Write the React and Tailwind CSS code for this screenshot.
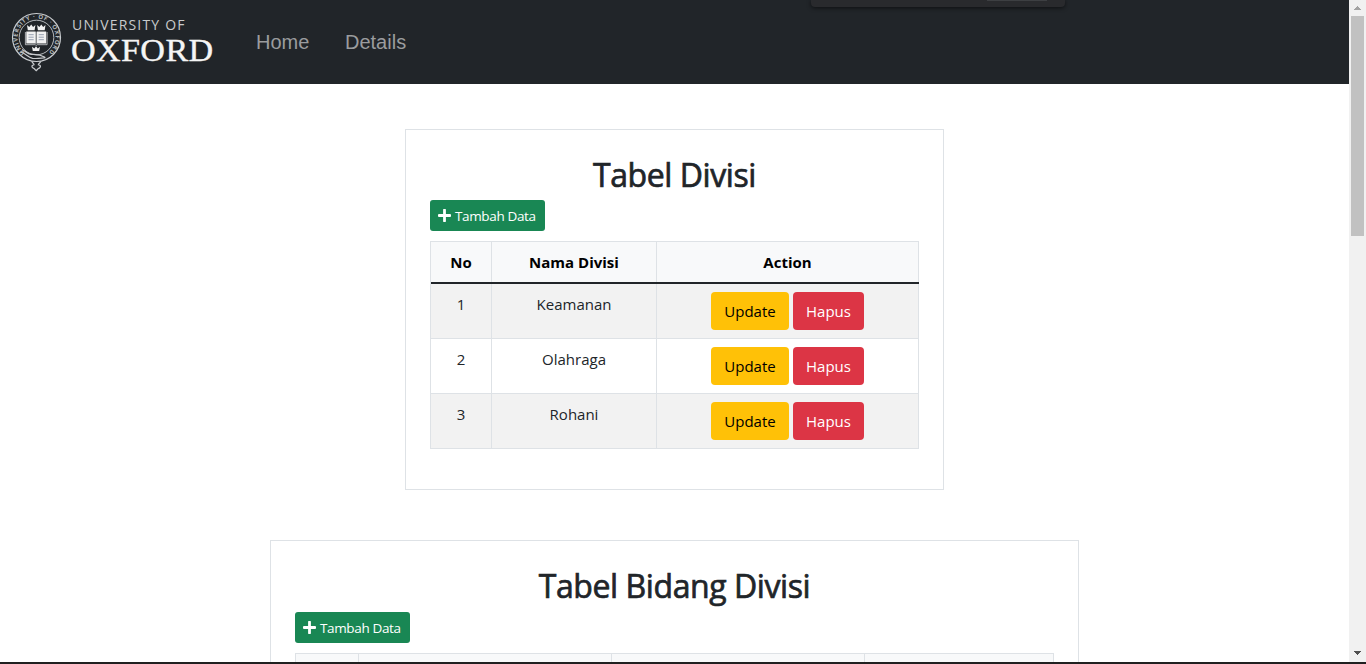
import React from "react";

const divisions = ["Keamanan", "Olahraga", "Rohani"];

function Crest() {
  return (
    <svg width="52" height="62" viewBox="10 11 52 62" className="block shrink-0 overflow-visible" fill="none">
      <defs>
        <path id="ring" d="M25 52.7 A19 19 0 1 1 48 52.7" />
      </defs>
      <circle cx="36.5" cy="37.5" r="24" stroke="#c9cccf" strokeWidth="1.2" />
      <circle cx="36.5" cy="37.5" r="17.3" stroke="#b5b9bd" strokeWidth="1" />
      <text fontFamily="Open Sans, sans-serif" fontSize="6" fontWeight="700" fill="#b4b8bb">
        <textPath href="#ring" textLength="93" lengthAdjust="spacing">UNIVERSITY · OF · OXFORD</textPath>
      </text>
      <g fill="#f1f1f1">
        <path d="M27 25l2.3 2 1.9-2.6 1.9 2.6 2.3-2-.8 5.2h-6.8z" />
        <path d="M37.1 25l2.3 2 1.9-2.6 1.9 2.6 2.3-2-.8 5.2h-6.8z" />
        <path d="M32 46.8l2.4 1.8 1.6-2.4 1.8 2.4 2.2-1.8-.8 4.2h-6.4z" />
        <path d="M26.3 31.6h9.2l.7.7.7-.7h9.3v12h-9.3l-.7.7-.7-.7h-9.2z" />
      </g>
      <path d="M25.4 32v12.7h9.8l1 .8 1-.8h9.9V32" stroke="#cfd2d4" strokeWidth="0.8" />
      <path d="M36.2 32v12" stroke="#30363b" strokeWidth="0.8" />
      <path d="M28.5 34.7h5.2M28.5 37.2h5.2M28.5 39.7h5.2M38.7 34.7h5.2M38.7 37.2h5.2M38.7 39.7h5.2" stroke="#8d98ab" strokeWidth="0.9" />
      <path d="M22 49.5c4 1.5 5 4.5 9 4.8 5 .4 8-.2 14 3M20.5 52c5 1 7 5 12 6.3 5 .8 9-.5 13-.7" stroke="#c9cccf" strokeWidth="1.2" />
      <path d="M32 61.2c0 2 2 2 2 3.5-2.3.7-2.6 2-1.3 3 1 .8 2 .5 2.2 1.7l1.3 1.2 1.3-1.2c.2-1.2 1.4-.9 2.2-1.7 1.3-1 1-2.3-1.3-3 0-1.5 2.2-1.5 2.2-3.5" stroke="#c6c9cc" strokeWidth="1.3" />
    </svg>
  );
}

function Logo() {
  return (
    <div className="flex h-[62px] w-[203px]">
      <Crest />
      <div className="flex flex-col pl-[9px] pt-[5px]">
        <span className="h-[18px] whitespace-nowrap pl-px font-['Open_Sans',sans-serif] text-[14px] leading-[18px] tracking-[1.18px] text-[#c8cacc]">UNIVERSITY OF</span>
        <span className="h-[32px] w-[134px] origin-left scale-x-[1.05] whitespace-nowrap font-['Liberation_Serif',serif] text-[32.5px] leading-[33px] tracking-[0.35px] text-[#f5f5f5] [-webkit-text-stroke:0.4px_#f5f5f5]">OXFORD</span>
      </div>
    </div>
  );
}

function AddButton() {
  return (
    <button className="flex h-[31px] w-[115px] shrink-0 items-center rounded-[3px] bg-[#198754] pl-[8px] text-[13.5px] tracking-[-0.36px] text-white">
      <svg width="13" height="13" viewBox="0 0 13 13" className="mr-[4px] shrink-0" fill="none">
        <path d="M6.5 1v11M1 6.5h11" stroke="#fff" strokeWidth="2.8" strokeLinecap="round" />
      </svg>
      <span className="whitespace-nowrap pt-px">Tambah Data</span>
    </button>
  );
}

function Title({ children }) {
  return (
    <h2 className="h-[38px] shrink-0 text-center text-[32px] leading-[42px] font-medium tracking-[-0.42px] [-webkit-text-stroke:0.7px_#212529]">
      {children}
    </h2>
  );
}

function HeaderCell({ children }) {
  return <div className="flex items-center justify-center border-r border-[#dee2e6] bg-[#f8f9fa] pt-px">{children}</div>;
}

function Cell({ children }) {
  return <div className="border-r border-b border-[#dee2e6] pt-2 text-center leading-6">{children}</div>;
}

export default function App() {
  return (
    <div className="flex h-[664px] w-[1366px] flex-col overflow-hidden bg-white font-['Open_Sans','Noto_Sans',sans-serif] text-[#212529]">
      <div className="flex min-h-0 flex-1">
        <div className="flex min-w-0 flex-1 flex-col overflow-hidden">
          <header className="relative flex h-[84px] shrink-0 items-start bg-[#212529] pt-[11px] pl-[10px]">
            <Logo />
            <nav className="flex gap-9 pt-[15px] pl-[43px] font-['Liberation_Sans',sans-serif] text-[20px] leading-8 text-[#9a9c9e]">
              <a className="w-[53px] whitespace-nowrap">Home</a>
              <a className="whitespace-nowrap">Details</a>
            </nav>
            <div className="absolute top-0 left-[811px] flex h-[7px] w-[254px] justify-end rounded-b-[4px] bg-[#292a2d] pr-[18px] shadow-[0_1px_4px_rgba(0,0,0,0.6)]">
              <div className="h-px w-[60px] bg-[#3d3f42]" />
            </div>
          </header>
          <main className="flex flex-col items-center pt-[45px]">
            <section className="flex h-[361px] w-[539px] shrink-0 flex-col border border-[#dee2e6] px-6 pt-6">
              <Title>Tabel Divisi</Title>
              <div className="mt-2 flex"><AddButton /></div>
              <div className="mt-[10px] border-t border-l border-[#dee2e6] text-[15px]">
                <div className="grid h-[42px] grid-cols-[61px_165px_262px] border-b-2 border-[#212529] font-bold text-black">
                  <HeaderCell>No</HeaderCell>
                  <HeaderCell>Nama Divisi</HeaderCell>
                  <HeaderCell>Action</HeaderCell>
                </div>
                {divisions.map((name, i) => (
                  <div key={name} className="grid h-[55px] grid-cols-[61px_165px_262px] odd:bg-white even:bg-[#f2f2f2]">
                    <Cell>{i + 1}</Cell>
                    <Cell>{name}</Cell>
                    <Cell>
                      <div className="flex justify-center gap-1">
                        <button className="h-[38px] w-[78px] rounded bg-[#ffc107] text-black">Update</button>
                        <button className="h-[38px] w-[71px] rounded bg-[#dc3545] text-white">Hapus</button>
                      </div>
                    </Cell>
                  </div>
                ))}
              </div>
            </section>
            <section className="mt-[50px] flex h-[361px] w-[809px] shrink-0 flex-col border border-[#dee2e6] px-6 pt-6">
              <Title>Tabel Bidang Divisi</Title>
              <div className="mt-[9px] flex"><AddButton /></div>
              <div className="mt-[10px] grid h-[42px] grid-cols-[63px_253px_253px_189px] border-t border-l border-[#dee2e6]">
                <HeaderCell />
                <HeaderCell />
                <HeaderCell />
                <HeaderCell />
              </div>
            </section>
          </main>
        </div>
        <div className="flex w-[17px] shrink-0 flex-col items-center justify-between bg-[#f1f1f1]">
          <div className="flex flex-col items-center">
            <svg width="17" height="16" viewBox="0 0 17 16" shapeRendering="crispEdges">
              <path d="M8 6h1v1h1v1h1v1h1v1H5V9h1V8h1V7h1z" fill="#a3a3a3" />
            </svg>
            <div className="h-[220px] w-[13px] bg-[#c1c1c1]" />
          </div>
          <svg width="17" height="17" viewBox="0 0 17 17" shapeRendering="crispEdges">
            <path d="M5 6h7v1h-1v1h-1v1H9v1H8V9H7V8H6V7H5z" fill="#505050" />
          </svg>
        </div>
      </div>
      <div className="h-[2px] shrink-0 bg-[#202020]" />
    </div>
  );
}
